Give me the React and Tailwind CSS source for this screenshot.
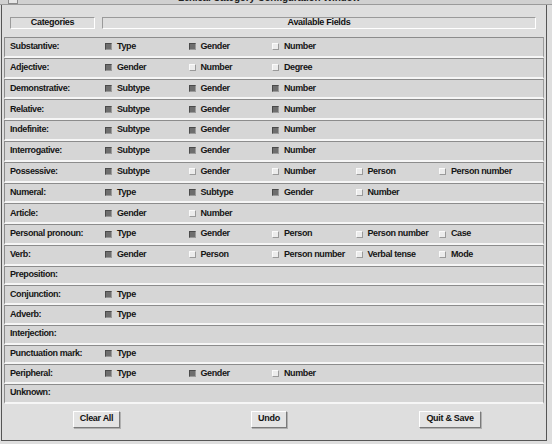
// App.jsx - Category configuration window
import React, { useState } from 'react';

const initialRows = [
  { name: 'Substantive:', fields: [['Type', true], ['Gender', true], ['Number', false]] },
  { name: 'Adjective:', fields: [['Gender', true], ['Number', false], ['Degree', false]] },
  { name: 'Demonstrative:', fields: [['Subtype', true], ['Gender', true], ['Number', true]] },
  { name: 'Relative:', fields: [['Subtype', true], ['Gender', true], ['Number', true]] },
  { name: 'Indefinite:', fields: [['Subtype', true], ['Gender', true], ['Number', true]] },
  { name: 'Interrogative:', fields: [['Subtype', true], ['Gender', true], ['Number', true]] },
  { name: 'Possessive:', fields: [['Subtype', true], ['Gender', false], ['Number', false], ['Person', false], ['Person number', false]] },
  { name: 'Numeral:', fields: [['Type', true], ['Subtype', true], ['Gender', true], ['Number', false]] },
  { name: 'Article:', fields: [['Gender', true], ['Number', false]] },
  { name: 'Personal pronoun:', fields: [['Type', true], ['Gender', true], ['Person', false], ['Person number', false], ['Case', false]] },
  { name: 'Verb:', fields: [['Gender', true], ['Person', false], ['Person number', false], ['Verbal tense', false], ['Mode', false]] },
  { name: 'Preposition:', fields: [] },
  { name: 'Conjunction:', fields: [['Type', true]] },
  { name: 'Adverb:', fields: [['Type', true]] },
  { name: 'Interjection:', fields: [] },
  { name: 'Punctuation mark:', fields: [['Type', true]] },
  { name: 'Peripheral:', fields: [['Type', true], ['Gender', true], ['Number', false]] },
  { name: 'Unknown:', fields: [] },
];

function Check({ on }) {
  return on ? (
    <span className="inline-block w-[7px] h-[7px] bg-[#6e6e6e] border-t border-l border-[#4a4a4a] border-b border-r border-b-[#9a9a9a] border-r-[#9a9a9a]" />
  ) : (
    <span className="inline-block w-[7px] h-[7px] bg-[#ececec] border-t border-l border-[#fafafa] border-b border-r border-b-[#9a9a9a] border-r-[#9a9a9a]" />
  );
}

function Button({ children, className, onClick }) {
  return (
    <button onClick={onClick} className={`h-[17px] bg-[#e4e4e4] border border-t-white border-l-white border-b-[#7a7a7a] border-r-[#7a7a7a] shadow-[1px_1px_0_#b0b0b0] text-[9px] font-bold tracking-[-0.3px] text-[#111] ${className}`}>
      {children}
    </button>
  );
}

export default function App() {
  const [rows, setRows] = useState(initialRows);

  const toggle = (ri, fi) => {
    setRows(rows.map((r, i) => i !== ri ? r : {
      ...r,
      fields: r.fields.map((f, j) => j === fi ? [f[0], !f[1]] : f),
    }));
  };

  const clearAll = () => setRows(rows.map(r => ({ ...r, fields: r.fields.map(f => [f[0], false]) })));

  return (
    <div className="w-[552px] h-[444px] bg-[#dedede] overflow-hidden flex flex-col" style={{ fontFamily: '"Liberation Sans", Arial, sans-serif' }}>
      {/* title bar, mostly scrolled off the top */}
      <div className="h-[5px] relative border-b border-[#9a9a9a] bg-[#d0d0d0] shrink-0">
        <span className="absolute left-[8px] top-[-6px] w-[10px] h-[10px] border border-[#8a8a8a] bg-[#e6e6e6]" />
        <span className="absolute left-[178px] top-[-8px] text-[10px] leading-[12px] font-bold text-[#222] tracking-[-0.2px]">Lexical Category Configuration Window</span>
      </div>

      <div className="flex-1 flex flex-col border-l border-r border-b border-[#555] ml-[1px] mr-[5px] mb-[3px]">
        {/* headers */}
        <div className="flex items-center gap-[7px] px-[8px] mt-[12px] mb-[8px] text-[9px] font-bold tracking-[-0.3px] text-[#111]">
          <div className="w-[85px] h-[12px] flex items-center justify-center border border-t-[#9a9a9a] border-l-[#9a9a9a] border-b-white border-r-white">Categories</div>
          <div className="flex-1 h-[12px] flex items-center justify-center border border-t-[#9a9a9a] border-l-[#9a9a9a] border-b-white border-r-white mr-[2px]">Available Fields</div>
        </div>

        {/* category rows */}
        <div className="flex flex-col px-[2px]">
          {rows.map((r, ri) => (
            <div
              key={r.name}
              className={`flex items-center bg-[#d6d6d6] border-t border-l border-[#8c8c8c] border-b-2 border-r border-b-[#f6f6f6] border-r-[#9c9c9c] ${ri < 11 ? 'h-[20.8px]' : 'h-[19.7px]'}`}
            >
              <div className="w-[100px] pl-[5px] text-[9px] font-bold tracking-[-0.4px] text-[#151515]">{r.name}</div>
              {r.fields.map((f, fi) => (
                <label key={f[0]} onClick={() => toggle(ri, fi)} className="w-[83.5px] flex items-center gap-[5px] cursor-pointer text-[9px] font-bold tracking-[-0.4px] text-[#151515]">
                  <Check on={f[1]} />
                  <span>{f[0]}</span>
                </label>
              ))}
            </div>
          ))}
        </div>

        {/* buttons */}
        <div className="flex items-center mt-[7px]">
          <Button className="ml-[71px] w-[47px]" onClick={clearAll}>Clear All</Button>
          <Button className="ml-[131px] w-[36px]">Undo</Button>
          <Button className="ml-[132px] w-[62px]">Quit &amp; Save</Button>
        </div>
      </div>
    </div>
  );
}
